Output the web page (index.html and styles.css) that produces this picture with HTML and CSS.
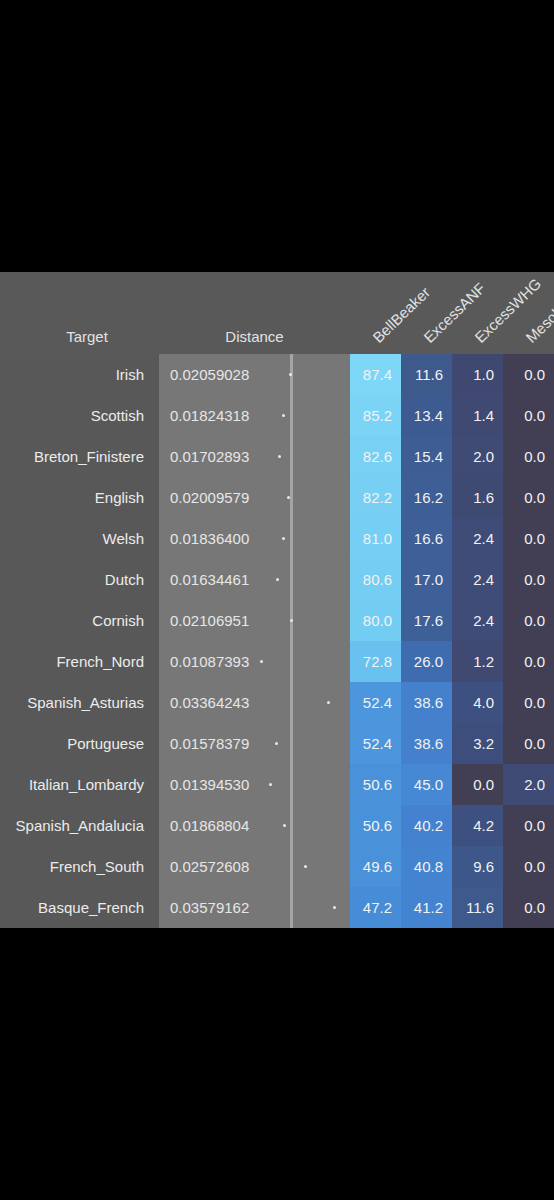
FILE: index.html
```html
<!DOCTYPE html>
<html lang="en">
<head>
    <meta charset="UTF-8">
    <meta name="viewport" content="width=device-width, initial-scale=1.0">
    <title>Distance table</title>
    <link rel="stylesheet" href="styles.css">
</head>
<body>
    <div class="top-space"></div>

    <div class="panel">
        <div class="grid" id="grid">
            <div class="head head-target">Target</div>
            <div class="head head-distance">Distance</div>
            <div class="head head-pop"><span>BellBeaker</span></div>
            <div class="head head-pop"><span>ExcessANF</span></div>
            <div class="head head-pop"><span>ExcessWHG</span></div>
            <div class="head head-pop"><span>Mesolithic</span></div>
        </div>
    </div>

    <script>
        var rows = [
            ['Irish', '0.02059028', 87.4, 11.6, 1.0, 0.0],
            ['Scottish', '0.01824318', 85.2, 13.4, 1.4, 0.0],
            ['Breton_Finistere', '0.01702893', 82.6, 15.4, 2.0, 0.0],
            ['English', '0.02009579', 82.2, 16.2, 1.6, 0.0],
            ['Welsh', '0.01836400', 81.0, 16.6, 2.4, 0.0],
            ['Dutch', '0.01634461', 80.6, 17.0, 2.4, 0.0],
            ['Cornish', '0.02106951', 80.0, 17.6, 2.4, 0.0],
            ['French_Nord', '0.01087393', 72.8, 26.0, 1.2, 0.0],
            ['Spanish_Asturias', '0.03364243', 52.4, 38.6, 4.0, 0.0],
            ['Portuguese', '0.01578379', 52.4, 38.6, 3.2, 0.0],
            ['Italian_Lombardy', '0.01394530', 50.6, 45.0, 0.0, 2.0],
            ['Spanish_Andalucia', '0.01868804', 50.6, 40.2, 4.2, 0.0],
            ['French_South', '0.02572608', 49.6, 40.8, 9.6, 0.0],
            ['Basque_French', '0.03579162', 47.2, 41.2, 11.6, 0.0]
        ];

        // value -> colour stops
        var stops = [
            [0, [66, 63, 85]],
            [1, [63, 72, 112]],
            [4, [62, 80, 128]],
            [12, [62, 90, 142]],
            [17, [62, 95, 152]],
            [26, [63, 108, 174]],
            [40, [68, 130, 207]],
            [45, [70, 136, 211]],
            [52, [74, 149, 220]],
            [72, [103, 192, 237]],
            [80, [115, 205, 243]],
            [88, [128, 216, 248]]
        ];

        function colour(v) {
            for (var i = 1; i < stops.length; i++) {
                if (v <= stops[i][0]) {
                    var a = stops[i - 1], b = stops[i];
                    var t = (v - a[0]) / (b[0] - a[0]);
                    var c = a[1].map(function (x, k) { return Math.round(x + (b[1][k] - x) * t); });
                    return 'rgb(' + c.join(',') + ')';
                }
            }
            return 'rgb(128,216,248)';
        }

        var grid = document.getElementById('grid');
        rows.forEach(function (r) {
            var html = '<div class="cell target">' + r[0] + '</div>';
            var left = 71 + parseFloat(r[1]) * 2929 - 1.5;
            html += '<div class="cell distance"><span class="num">' + r[1] + '</span>' +
                '<span class="line"></span><span class="rest"></span>' +
                '<span class="dot" style="left:' + left.toFixed(1) + 'px"></span></div>';
            for (var i = 2; i < 6; i++) {
                html += '<div class="cell pop" style="background:' + colour(r[i]) + '">' + r[i].toFixed(1) + '</div>';
            }
            grid.insertAdjacentHTML('beforeend', html);
        });
    </script>
</body>
</html>
```

FILE: styles.css
```css
* {
    margin: 0;
    padding: 0;
    box-sizing: border-box;
}

body {
    background-color: #000;
    font-family: 'Liberation Sans', Arial, sans-serif;
    font-size: 15px;
    color: #ececec;
    overflow: hidden;
}

.top-space {
    height: 272px;
}

.panel {
    background-color: #595959;
    overflow: hidden;
    width: 554px;
}

.grid {
    display: grid;
    grid-template-columns: 159px 191px 51px 51px 51px 53px;
    grid-auto-rows: 41px;
    grid-template-rows: 82px;
}

.head {
    display: flex;
    align-items: flex-end;
    padding-bottom: 9px;
    color: #e2e2e2;
    line-height: 17px;
}

.head-target,
.head-distance {
    justify-content: center;
}

.head-target {
    padding-left: 15px;
}

.head-pop {
    padding-left: 31px;
    padding-bottom: 8px;
    overflow: visible;
}

.head-pop span {
    display: inline-block;
    white-space: nowrap;
    transform: rotate(-44deg);
    transform-origin: 0 100%;
}

.cell {
    display: flex;
    align-items: center;
}

.target {
    justify-content: flex-end;
    padding-right: 15px;
    background-color: #585858;
}

.distance {
    position: relative;
    background-color: #777;
    color: #e6e6e6;
}

.num {
    width: 131px;
    padding-left: 11px;
}

.line {
    width: 3px;
    height: 100%;
    background-color: #a4a4a4;
}

.rest {
    flex: 1;
}

.dot {
    position: absolute;
    top: 19px;
    width: 3px;
    height: 3px;
    border-radius: 50%;
    background-color: #e8e8e8;
}

.pop {
    justify-content: flex-end;
    padding-right: 9px;
    color: #f2f2f2;
}

.pop:nth-child(6n) {
    padding-right: 11px;
}
```
